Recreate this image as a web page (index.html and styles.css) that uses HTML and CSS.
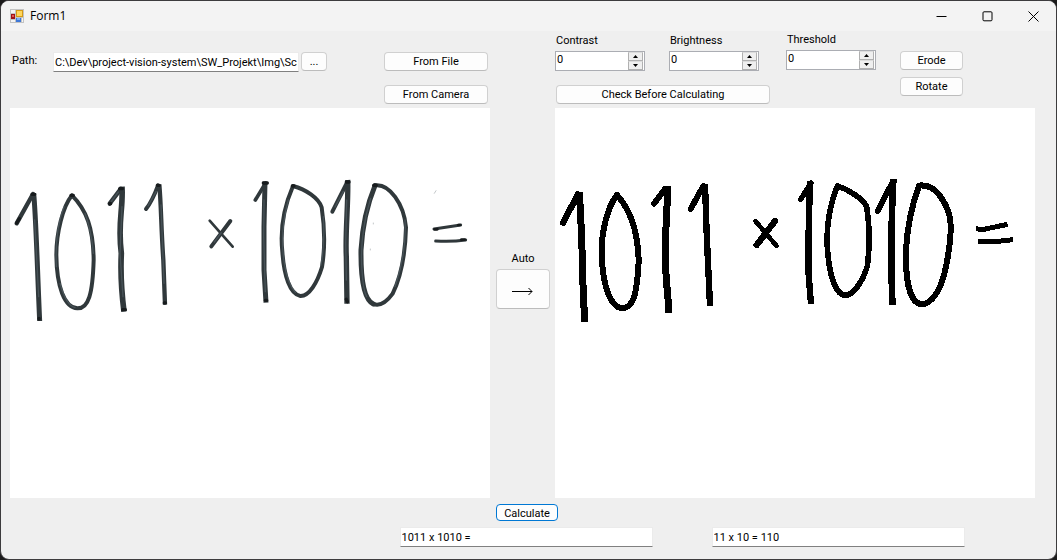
FILE: index.html
```html
<!DOCTYPE html>
<html lang="en">
<head>
<meta charset="utf-8">
<title>Form1</title>
<link rel="stylesheet" href="styles.css">
</head>
<body>
<div class="window">
  <header class="titlebar">
    <svg class="app-icon" width="14" height="14" viewBox="0 0 14 14" aria-hidden="true">
      <rect width="14" height="14" fill="#c3c3c3"/>
      <path d="M1 1h4v3H1zM1 11h4v2H1zM12 9h1v4h-1z" fill="#f4f4f4"/>
      <rect x="6" y="1" width="7" height="7" fill="#d59a16"/>
      <rect x="7" y="2" width="5" height="5" fill="#ffd65c"/>
      <rect x="1" y="5" width="4" height="5" fill="#a01218"/>
      <rect x="2" y="6" width="2" height="2" fill="#e45750"/>
      <rect x="6" y="9" width="5" height="4" fill="#3e78d8"/>
      <rect x="7" y="9" width="3" height="2" fill="#7eb0f4"/>
    </svg>
    <h1 class="title">Form1</h1>
    <div class="window-controls">
      <button class="window-button" aria-label="Minimize"><svg width="11" height="11" viewBox="0 0 11 11"><path d="M.5 5.500H10.500" /></svg></button>
      <button class="window-button" aria-label="Maximize"><svg width="11" height="11" viewBox="0 0 11 11"><rect x="1" y=".8" width="9" height="9" rx="1"/></svg></button>
      <button class="window-button" aria-label="Close"><svg width="11" height="11" viewBox="0 0 11 11"><path d="M.5.5l10 10M10.500.5l-10 10"/></svg></button>
    </div>
  </header>

  <main class="content">
    <section class="source-tools">
      <div class="path-row">
        <label class="path-label" for="path">Path:</label>
        <input class="text-box path-box" id="path" type="text" value="C:\Dev\project-vision-system\SW_Projekt\Img\Scan.png">
        <button class="button browse">...</button>
      </div>
      <div class="source-buttons">
        <button class="button">From File</button>
        <button class="button">From Camera</button>
      </div>
    </section>

    <section class="filter-tools">
      <div class="adjustments">
        <div class="spinners">
          <div class="field">
            <label for="contrast">Contrast</label>
            <div class="spinner"><input id="contrast" type="number" value="0"><div class="steps"><button class="step" aria-label="Increase contrast"><svg width="5" height="3" viewBox="0 0 5 3"><path d="M0 3L2.500 0 5 3z"/></svg></button><button class="step" aria-label="Decrease contrast"><svg width="5" height="3" viewBox="0 0 5 3"><path d="M0 0h5L2.500 3z"/></svg></button></div></div>
          </div>
          <div class="field">
            <label for="brightness">Brightness</label>
            <div class="spinner"><input id="brightness" type="number" value="0"><div class="steps"><button class="step" aria-label="Increase brightness"><svg width="5" height="3" viewBox="0 0 5 3"><path d="M0 3L2.500 0 5 3z"/></svg></button><button class="step" aria-label="Decrease brightness"><svg width="5" height="3" viewBox="0 0 5 3"><path d="M0 0h5L2.500 3z"/></svg></button></div></div>
          </div>
          <div class="field">
            <label for="threshold">Threshold</label>
            <div class="spinner"><input id="threshold" type="number" value="0"><div class="steps"><button class="step" aria-label="Increase threshold"><svg width="5" height="3" viewBox="0 0 5 3"><path d="M0 3L2.500 0 5 3z"/></svg></button><button class="step" aria-label="Decrease threshold"><svg width="5" height="3" viewBox="0 0 5 3"><path d="M0 0h5L2.500 3z"/></svg></button></div></div>
          </div>
        </div>
        <button class="button check">Check Before Calculating</button>
      </div>
      <div class="morphology">
        <button class="button">Erode</button>
        <button class="button">Rotate</button>
      </div>
    </section>

    <svg class="picture source-picture" viewBox="0 0 480 390" role="img" aria-label="Handwritten binary multiplication">
      <g class="ink" transform="translate(-10 62) scale(.33333)">
        <path stroke-width="13" d="M50 160L99 72"/>
        <path stroke-width="15" stroke-linecap="butt" d="M101 70C108 140 112 300 119 453"/>
        <path stroke-width="12" d="M216 76C188 110 169 190 169 255C170 350 193 412 232 415C266 416 278 370 281 270C280 175 260 120 216 76"/>
        <path stroke-width="13" d="M329 101L363 56"/>
        <path stroke-width="17" stroke-linecap="butt" d="M366 50C370 120 352 160 364 250Q360 330 372 425"/>
        <path stroke-width="12" d="M438 117Q457 93 474 46"/>
        <path stroke-width="13" stroke-linecap="butt" d="M478 43C484 115 483 170 490 270L495 404"/>
        <path stroke-width="12" d="M634 229L691 153"/>
        <path stroke-width="8" d="M629 152L660 187L698 230"/>
      </g>
      <g class="ink" transform="translate(230 62) scale(.33333)">
        <path stroke-width="11" d="M46 90L77 39"/>
        <path stroke-width="15" stroke-linecap="butt" d="M75 35L72 170L72 300L78 398"/>
        <path stroke-width="12" d="M159 48C130 115 120 180 127 245C132 318 150 373 181 378C208 379 232 337 246 291C256 230 253 165 245 112C236 84 197 58 159 48"/>
        <path stroke-width="12" d="M277 125L322 36"/>
        <path stroke-width="16" stroke-linecap="butt" d="M323 30C326 90 315 190 319 260L321 401"/>
        <path stroke-width="15" d="M405 47C379 110 367 170 363 240C362 325 372 389 400 402"/>
        <path stroke-width="12" d="M405 46C448 40 492 102 498 172C496 255 480 326 458 371C437 400 419 409 400 402"/>
        <path stroke-width="9" d="M582 177L662 165"/>
        <path stroke-width="9" d="M587 213Q635 216 677 210"/>
      </g>
      <g class="ink-light" transform="translate(-10 62) scale(.33333)">
        <path d="M104 150L116 380M169 290Q164 180 192 110M280 250Q275 185 255 130M334 94L355 66M366 110L360 250L369 380M444 108L468 65M483 105L492 340M643 216L664 188M180 340Q198 405 225 413"/>
      </g>
      <g class="ink-light" transform="translate(230 62) scale(.33333)">
        <path d="M72 90L71 200L76 365M145 90Q118 190 133 280Q142 340 166 367M250 140Q255 220 243 285M285 111L310 64M320 90L317 220L319 330M392 85Q358 195 366 300Q369 360 380 380M495 150Q500 250 465 350"/>
      </g>
      <g class="ink-tip" transform="translate(-10 62) scale(.33333)">
        <path d="M96 73h8M50 159l8-13M213 76h7M359 56h8M329 101h3M472 46h6M368 419h8M493 399h3M117 445v2"/>
      </g>
      <g class="ink-tip" transform="translate(230 62) scale(.33333)">
        <path d="M70 39h12M157 48h5M319 36h8M319 388l3 7M401 46h8M76 391h4"/>
        <path stroke-width="8" d="M655 165h4M584 178h8M664 209h10"/>
        <path class="speck" d="M583 70l5-8M400 159v3M391 237v3"/>
      </g>
    </svg>

    <div class="auto">
      <label for="auto">Auto</label>
      <button class="button auto-button" id="auto"><svg width="22" height="10" viewBox="0 0 22 10" aria-hidden="true"><path d="M0 6.500H20M16.500 3l3.500 3.500-3.500 3.500"/></svg></button>
    </div>

    <svg class="picture result-picture" viewBox="0 0 480 390" role="img" aria-label="Thresholded binary multiplication">
      <g class="mask" transform="translate(-5 62) scale(.33333)">
        <path stroke-width="19" d="M39 158L84 73"/>
        <path stroke-width="21" stroke-linecap="butt" d="M88 67C93 150 97 250 98 320L104 456"/>
        <path stroke-width="18" d="M201 75C174 107 154 184 155 247C157 345 180 411 217 415C250 414 261 373 266 274C264 184 241 119 201 75"/>
        <path stroke-width="18" d="M312 101L346 56"/>
        <path stroke-width="21" stroke-linecap="butt" d="M352 49C353 130 344 200 346 250C346 335 356 385 357 429"/>
        <path stroke-width="18" d="M422 117L460 48"/>
        <path stroke-width="19" stroke-linecap="butt" d="M465 41L470 190L480 407"/>
        <path stroke-width="19" d="M620 225L675 153"/>
        <path stroke-width="14" d="M616 153L680 228"/>
      </g>
      <g class="mask" transform="translate(230 62) scale(.33333)">
        <path stroke-width="16" d="M47 88L78 39"/>
        <path stroke-width="19" stroke-linecap="butt" d="M75 32L71 180L71 315L78 402"/>
        <path stroke-width="17" d="M157 48C131 115 122 180 128 245C134 315 151 374 181 376C207 375 235 330 247 288C255 225 254 165 245 110C231 84 188 57 157 48"/>
        <path stroke-width="17" d="M278 123L323 35"/>
        <path stroke-width="20" stroke-linecap="butt" d="M325 27L321 120L319 270L322 405"/>
        <path stroke-width="18" d="M402 47C379 110 367 170 363 240C361 325 373 400 410 403C441 401 467 360 480 304C498 220 502 150 488 119C465 65 436 42 402 47"/>
        <path stroke-width="15" stroke-linecap="butt" d="M573 176L592 179L668 163"/>
        <path stroke-width="15" stroke-linecap="butt" d="M579 214L630 215L684 209"/>
      </g>
    </svg>

    <footer class="results">
      <button class="button calculate">Calculate</button>
      <div class="result-boxes">
        <input class="text-box" type="text" value="1011 x 1010 =" aria-label="Expression">
        <input class="text-box" type="text" value="11 x 10 = 110" aria-label="Decimal result">
      </div>
    </footer>
  </main>
</div>
</body>
</html>
```
FILE: styles.css
```css
* {
  box-sizing: border-box;
}

body {
  margin: 0;
  background: #1b1b1b;
  color: #000;
  font: 11px/16px Roboto, sans-serif;
}

input,
button {
  margin: 0;
  font: inherit;
  color: inherit;
}

.window {
  min-height: 100vh;
  border: 1px solid #3c3b3d;
  border-radius: 9px;
  overflow: hidden;
  background: #efefef;
}

.titlebar {
  display: flex;
  align-items: center;
  height: 30px;
  padding-left: 9px;
  background: #f3f3f3;
}

.title {
  flex: 1;
  margin: 0 0 0 6px;
  font: 12px/16px "Open Sans", sans-serif;
}

.window-controls {
  display: flex;
}

.window-button {
  display: grid;
  place-items: center;
  width: 46px;
  height: 28px;
  padding: 0;
  border: 0;
  background: none;
}

.window-button svg {
  fill: none;
  stroke: #000;
}

.content {
  display: grid;
  grid-template-columns: minmax(0, 1fr) 65px minmax(0, 1fr);
  grid-template-rows: 77px auto auto;
  padding: 0 21px 0 9px;
}

.button {
  height: 19px;
  padding: 1px 0 0;
  border: 1px solid #d0d0d0;
  border-bottom-color: #bcbcbc;
  border-radius: 4px;
  background: #fdfdfd;
  line-height: 16px;
}

.text-box {
  min-width: 0;
  height: 20px;
  padding: 0 1px;
  border: 1px solid #ebebeb;
  border-bottom-color: #808080;
  border-radius: 0;
  background: #fff;
}

.source-tools {
  display: flex;
  justify-content: space-between;
  padding: 21px 2px 0;
}

.path-row {
  display: flex;
  align-items: flex-start;
}

.path-label {
  width: 41px;
  line-height: 18px;
}

.path-box {
  width: 246px;
  margin-right: 2px;
}

.browse {
  width: 26px;
}

.source-buttons {
  display: grid;
  grid-template-columns: 104px;
  align-content: start;
  row-gap: 14px;
}

.filter-tools {
  grid-column: 3;
  display: flex;
  gap: 24px;
}

.spinners {
  display: flex;
  gap: 24px;
}

.field {
  display: flex;
  flex-direction: column;
  padding-top: 1px;
}

.field:last-child {
  padding: 0 0 0 3px;
}

.field label {
  padding: 0 0 2px 1px;
  line-height: 17px;
}

.spinner {
  display: flex;
  width: 90px;
  height: 20px;
  border: 1px solid #abadb3;
  background: #fff;
}

.spinner input {
  flex: 1;
  min-width: 0;
  padding: 0 0 2px 1px;
  border: 0;
  background: none;
  appearance: textfield;
}

.spinner input::-webkit-inner-spin-button {
  appearance: none;
}

.steps {
  display: grid;
  grid-template-rows: 9px 9px;
  width: 16px;
  padding-right: 1px;
}

.step {
  display: grid;
  place-items: center;
  padding: 0;
  border: 1px solid #b0b0b0;
  border-top-color: #dcdcdc;
  border-radius: 0;
  background: #efefef;
}

.check {
  width: 214px;
  margin: 14px 0 0 1px;
}

.morphology {
  display: grid;
  grid-template-columns: 63px;
  align-content: start;
  gap: 7px;
  padding-top: 20px;
}

.picture {
  display: block;
  width: 100%;
  background: #fff;
}

.ink,
.ink-light,
.ink-tip,
.mask {
  fill: none;
  stroke-linecap: round;
  stroke-linejoin: round;
}

.ink {
  stroke: #30383b;
}

.ink-light {
  stroke: #56646a;
  stroke-width: 4;
  opacity: 0.6;
}

.ink-tip {
  stroke: #171b1d;
  stroke-width: 10;
}

.speck {
  stroke: #a5aaad;
  stroke-width: 2;
}

.mask {
  stroke: #000;
  shape-rendering: crispEdges;
}

.auto {
  display: flex;
  flex-direction: column;
  align-items: center;
  padding: 143px 0 0 1px;
}

.auto-button {
  display: grid;
  place-items: center;
  width: 54px;
  height: 40px;
  margin-top: 2px;
}

.auto-button svg {
  fill: none;
  stroke: #000;
}

.results {
  grid-column: 1 / -1;
  display: flex;
  flex-direction: column;
  align-items: center;
  padding-top: 6px;
}

.calculate {
  width: 62px;
  height: 17px;
  margin-left: 9px;
  border-color: #0078d4;
}

.result-boxes {
  display: grid;
  grid-template-columns: 253px 253px;
  gap: 59px;
  margin: 6px 0 0 319px;
}
```
